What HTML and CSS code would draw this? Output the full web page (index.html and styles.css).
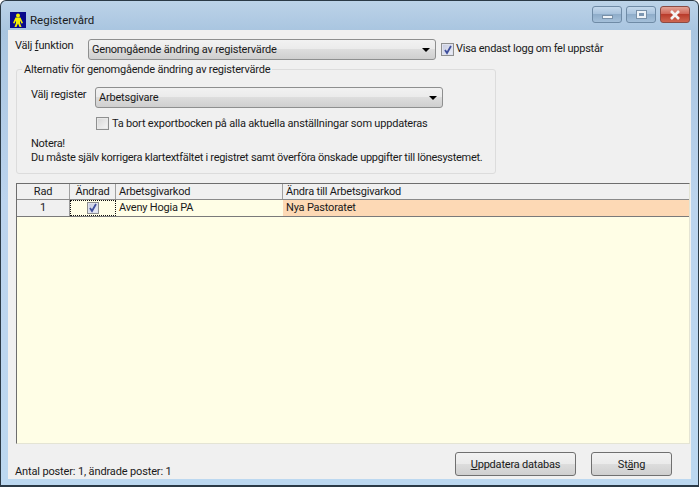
FILE: index.html
```html
<!DOCTYPE html>
<html lang="sv">
<head>
<meta charset="utf-8">
<title>Registervård</title>
<link rel="stylesheet" href="styles.css">
</head>
<body>
<div class="window">
  <header class="titlebar">
    <svg class="app-icon" width="16" height="16" viewBox="0 0 16 16">
      <rect width="16" height="16" fill="#0a0a8c"/>
      <circle cx="8" cy="3.500" r="2" fill="#f4f000"/>
      <path d="M5.500 5.500h5L13 11l-1.500.5-1.500-3V11l1.500 4H9.500L8 11.500 6.500 15h-2L6 11V8.500l-1.500 3L3 11z" fill="#f4f000"/>
    </svg>
    <span class="title">Registervård</span>
    <div class="controls">
      <div class="ctl"><span class="glyph-min"></span></div>
      <div class="ctl"><span class="glyph-max"></span></div>
      <div class="ctl close"><svg width="14" height="10" viewBox="0 0 14 10"><path d="M3 1l8 8M11 1l-8 8" stroke="#f4f4f4" stroke-width="2.600" fill="none"/></svg></div>
    </div>
  </header>
  <main class="client">
    <div class="func-row">
      <label class="func-label">Välj <u>f</u>unktion</label>
      <div class="combo func-combo"><span>Genomgående ändring av registervärde</span><i class="arrow"></i></div>
      <span class="check checked"><svg width="10" height="10" viewBox="0 0 10 10"><path d="M2 5l2 3 4-7" stroke="#3f4f9c" stroke-width="1.800" fill="none"/></svg></span>
      <span class="check-text">Visa endast logg om fel uppstår</span>
    </div>
    <section class="group">
      <div class="legend">Alternativ för genomgående ändring av registervärde</div>
      <div class="reg-row">
        <label class="reg-label">Välj register</label>
        <div class="combo reg-combo"><span>Arbetsgivare</span><i class="arrow"></i></div>
      </div>
      <div class="export-row">
        <span class="check"></span>
        <span class="check-text">Ta bort exportbocken på alla aktuella anställningar som uppdateras</span>
      </div>
      <p class="note">Notera!<br>Du måste själv korrigera klartextfältet i registret samt överföra önskade uppgifter till lönesystemet.</p>
    </section>
    <section class="grid">
      <div class="row head">
        <div class="cell c-rad">Rad</div>
        <div class="cell c-and">Ändrad</div>
        <div class="cell c-kod">Arbetsgivarkod</div>
        <div class="cell c-ny">Ändra till Arbetsgivarkod</div>
      </div>
      <div class="row data">
        <div class="cell c-rad">1</div>
        <div class="cell c-and focus"><span class="check checked small"><svg width="10" height="10" viewBox="0 0 10 10"><path d="M2 5l2 3 4-7" stroke="#3f4f9c" stroke-width="1.800" fill="none"/></svg></span></div>
        <div class="cell c-kod">Aveny Hogia PA</div>
        <div class="cell c-ny changed">Nya Pastoratet</div>
      </div>
    </section>
    <footer class="footer">
      <span class="status">Antal poster: 1, ändrade poster: 1</span>
      <div class="btn btn-update"><u>U</u>ppdatera databas</div>
      <div class="btn btn-close">St<u>ä</u>ng</div>
    </footer>
  </main>
</div>
</body>
</html>
```
FILE: styles.css
```css
* { box-sizing: border-box; }
html, body { margin: 0; padding: 0; }
body {
  width: 699px;
  height: 487px;
  overflow: hidden;
  background: #fff;
  font-family: Roboto, "Liberation Sans", Arial, sans-serif;
  font-size: 11px;
  letter-spacing: -0.2px;
  color: #1a1a1a;
}
.window {
  width: 699px;
  height: 487px;
  display: flex;
  flex-direction: column;
  padding: 0 7px 6px;
  border: 1px solid #2b3a46;
  border-bottom-width: 2px;
  border-radius: 6px 6px 0 0;
  background: linear-gradient(#bcd3e8 0, #a9c5e0 30px, #bcd4ee 200px, #bcd8f0 100%);
}
.titlebar {
  height: 29px;
  flex: none;
  display: flex;
  align-items: center;
  margin: 0 -1px;
  padding-top: 7px;
}
.app-icon { margin: 1px 0 0 3px; flex: none; }
.title { margin-left: 4px; font-size: 11.500px; letter-spacing: 0; padding-top: 1px; }
.controls {
  margin: -9px 2px 0 auto;
  display: flex;
  gap: 4px;
}
.ctl {
  width: 30px;
  height: 17px;
  border: 1px solid #6f8ba6;
  border-radius: 3px;
  background: linear-gradient(#c3d8ec 0, #a9c3dd 45%, #8fadca 50%, #a5c0da 100%);
  display: flex;
  align-items: center;
  justify-content: center;
}
.ctl.close {
  border-color: #8b4b44;
  background: linear-gradient(#e3a396 0, #d0685a 45%, #b93c2c 50%, #cf6650 100%);
}
.glyph-min {
  width: 11px;
  height: 4px;
  margin-top: 5px;
  background: #eef3f8;
  border: 1px solid #7890a8;
}
.glyph-max {
  width: 9px;
  height: 7px;
  border: 2px solid #eef3f8;
  outline: 1px solid #7890a8;
  background: #7d97b2;
}
.client {
  flex: 1;
  display: flex;
  flex-direction: column;
  background: #f0f0f0;
  padding: 0 0 0 7px;
  min-height: 0;
}
.func-row {
  display: flex;
  align-items: flex-start;
  height: 23px;
  margin-top: 9px;
}
.func-label { width: 73px; line-height: 14px; }
.combo {
  height: 21px;
  border: 1px solid #8e8f8f;
  border-radius: 3px;
  background: linear-gradient(#f2f2f2 0, #ebebeb 48%, #dddddd 50%, #cfcfcf 100%);
  display: flex;
  align-items: center;
  justify-content: space-between;
  padding: 0 4px 0 3px;
}
.func-combo { width: 348px; }
.reg-combo { width: 348px; }
.arrow {
  width: 0;
  height: 0;
  border-left: 4px solid transparent;
  border-right: 4px solid transparent;
  border-top: 4px solid #000;
  margin-right: 1px;
}
.check {
  width: 13px;
  height: 13px;
  flex: none;
  border: 1px solid #8e8f8f;
  background: linear-gradient(135deg, #d5d5d5, #f6f6f6);
  box-shadow: inset 0 0 0 1px #e8e8e8;
  display: inline-flex;
  align-items: center;
  justify-content: center;
}
.check.checked {
  background: linear-gradient(135deg, #c4c9de, #eef0f8);
  box-shadow: inset 0 0 0 1px #dfe2ee;
}
.func-row .check { margin: 4px 2px 0 5px; }
.func-row .check-text { margin-top: 3px; line-height: 14px; letter-spacing: -0.26px; }
.group {
  position: relative;
  width: 480px;
  height: 105px;
  margin: 7px 0 0 1px;
  border: 1px solid #dcdcdc;
  border-radius: 3px;
  flex: none;
}
.legend {
  position: absolute;
  top: -7px;
  left: 5px;
  padding: 0 2px;
  line-height: 14px;
  background: #f0f0f0;
}
.reg-row {
  display: flex;
  align-items: flex-start;
  margin: 17px 0 0 14px;
}
.reg-label { width: 64px; line-height: 14px; margin-top: 1px; }
.export-row {
  display: flex;
  align-items: center;
  margin: 8px 0 0 79px;
  height: 15px;
}
.export-row .check-text { margin-left: 3px; }
.note {
  margin: 6px 0 0 14px;
  line-height: 14px;
  white-space: nowrap;
  letter-spacing: -0.28px;
}
.grid {
  flex: none;
  height: 261px;
  width: 674px;
  margin: 9px 0 0 1px;
  background: #fffee6;
  border-top: 1px solid #6d6d6d;
  border-left: 1px solid #6d6d6d;
  border-bottom: 1px solid #e4e4d4;
  border-right: 1px solid #e4e4d4;
}
.row {
  display: flex;
}
.cell {
  padding: 0 3px;
  white-space: nowrap;
}
.head {
  height: 16px;
  background: #f4f4f4;
  border-bottom: 1px solid #8a8a8a;
}
.head .cell {
  line-height: 15px;
  border-right: 1px solid #a0a0a0;
  background: #f0f0f0;
}
.head .c-ny { border-right: 0; flex: 1; border-left: 0; }
.data {
  height: 17px;
  border-bottom: 1px solid #7a7a7a;
}
.data .cell { line-height: 16px; }
.c-rad { width: 53px; text-align: center; }
.c-and { width: 46px; text-align: center; }
.c-kod { width: 167px; }
.c-ny { flex: 1; }
.data .c-rad { background: #f0f0f0; border-right: 1px solid #9a9a9a; }
.focus {
  border: 1px dotted #111;
  height: 16px;
  display: flex;
  align-items: center;
  justify-content: center;
}
.small { width: 12px; height: 12px; }
.changed { background: #fdd9b5; }
.footer {
  flex: 1;
  position: relative;
  display: flex;
  align-items: flex-end;
  padding-bottom: 0;
}
.status { line-height: 14px; letter-spacing: -0.14px; }
.btn {
  height: 24px;
  border: 1px solid #707070;
  border-radius: 3px;
  background: linear-gradient(#f2f2f2 0, #ebebeb 48%, #dddddd 50%, #cfcfcf 100%);
  display: flex;
  align-items: center;
  justify-content: center;
  margin-bottom: 3px;
}
.btn-update { width: 121px; margin-left: auto; }
.btn-close { width: 81px; margin-left: 15px; margin-right: 19px; }
```
